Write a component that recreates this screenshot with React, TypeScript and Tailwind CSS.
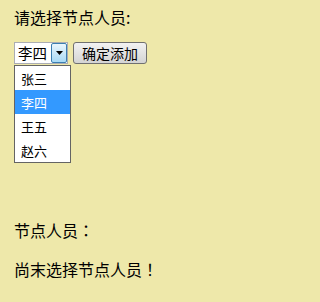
import { useState } from "react";

const people = ["张三", "李四", "王五", "赵六"];

// full-width punctuation sits centred in its cell in the reference
const punct = "font-['Noto_Sans_CJK_TC',sans-serif]";

export default function App() {
  const [selected] = useState("李四");

  return (
    <div className="min-h-screen bg-[#eee8aa] px-[14px] font-['Noto_Sans_CJK_SC','Noto_Sans',sans-serif] text-black">
      <div className="flex flex-col">
        <p className="mt-[9px] text-[16px] leading-[16px]">请选择节点人员:</p>

        <div className="mt-[17px] flex items-start gap-[5px]">
          {/* opened select */}
          <div className="relative">
            <div className="flex h-[22px] w-[54px] border border-[#abadb3] bg-white">
              <span className="flex flex-1 items-center pl-[3px] text-[14.5px] leading-none">
                {selected}
              </span>
              <span className="flex w-[16px] items-center justify-center rounded-[2px] border border-[#3c7fb1] bg-gradient-to-b from-[#eaf6fd] to-[#a7d9f5]">
                <svg width="7" height="4" viewBox="0 0 7 4">
                  <path d="M0 0h7L3.5 4z" fill="#000" />
                </svg>
              </span>
            </div>

            <ul className="absolute left-0 top-[23px] w-[57px] border border-[#646464] bg-white">
              {people.map((name) => (
                <li
                  key={name}
                  className={
                    name === selected
                      ? "flex h-[24px] items-center bg-[#3399ff] pl-[6px] text-[13px] leading-none text-white"
                      : "flex h-[24px] items-center pl-[6px] text-[13px] leading-none"
                  }
                >
                  {name}
                </li>
              ))}
            </ul>
          </div>

          <button className="flex h-[22px] w-[74px] items-center justify-center rounded-[3px] border border-[#707070] bg-gradient-to-b from-[#f2f2f2] to-[#d4d4d4] text-[14px] leading-none">
            确定添加
          </button>
        </div>

        <p className="mt-[158px] text-[16px] leading-[16px]">
          节点人员<span className={punct}>：</span>
        </p>
        <p className="mt-[23px] text-[16px] leading-[16px]">
          尚末选择节点人员<span className={punct}>！</span>
        </p>
      </div>
    </div>
  );
}
